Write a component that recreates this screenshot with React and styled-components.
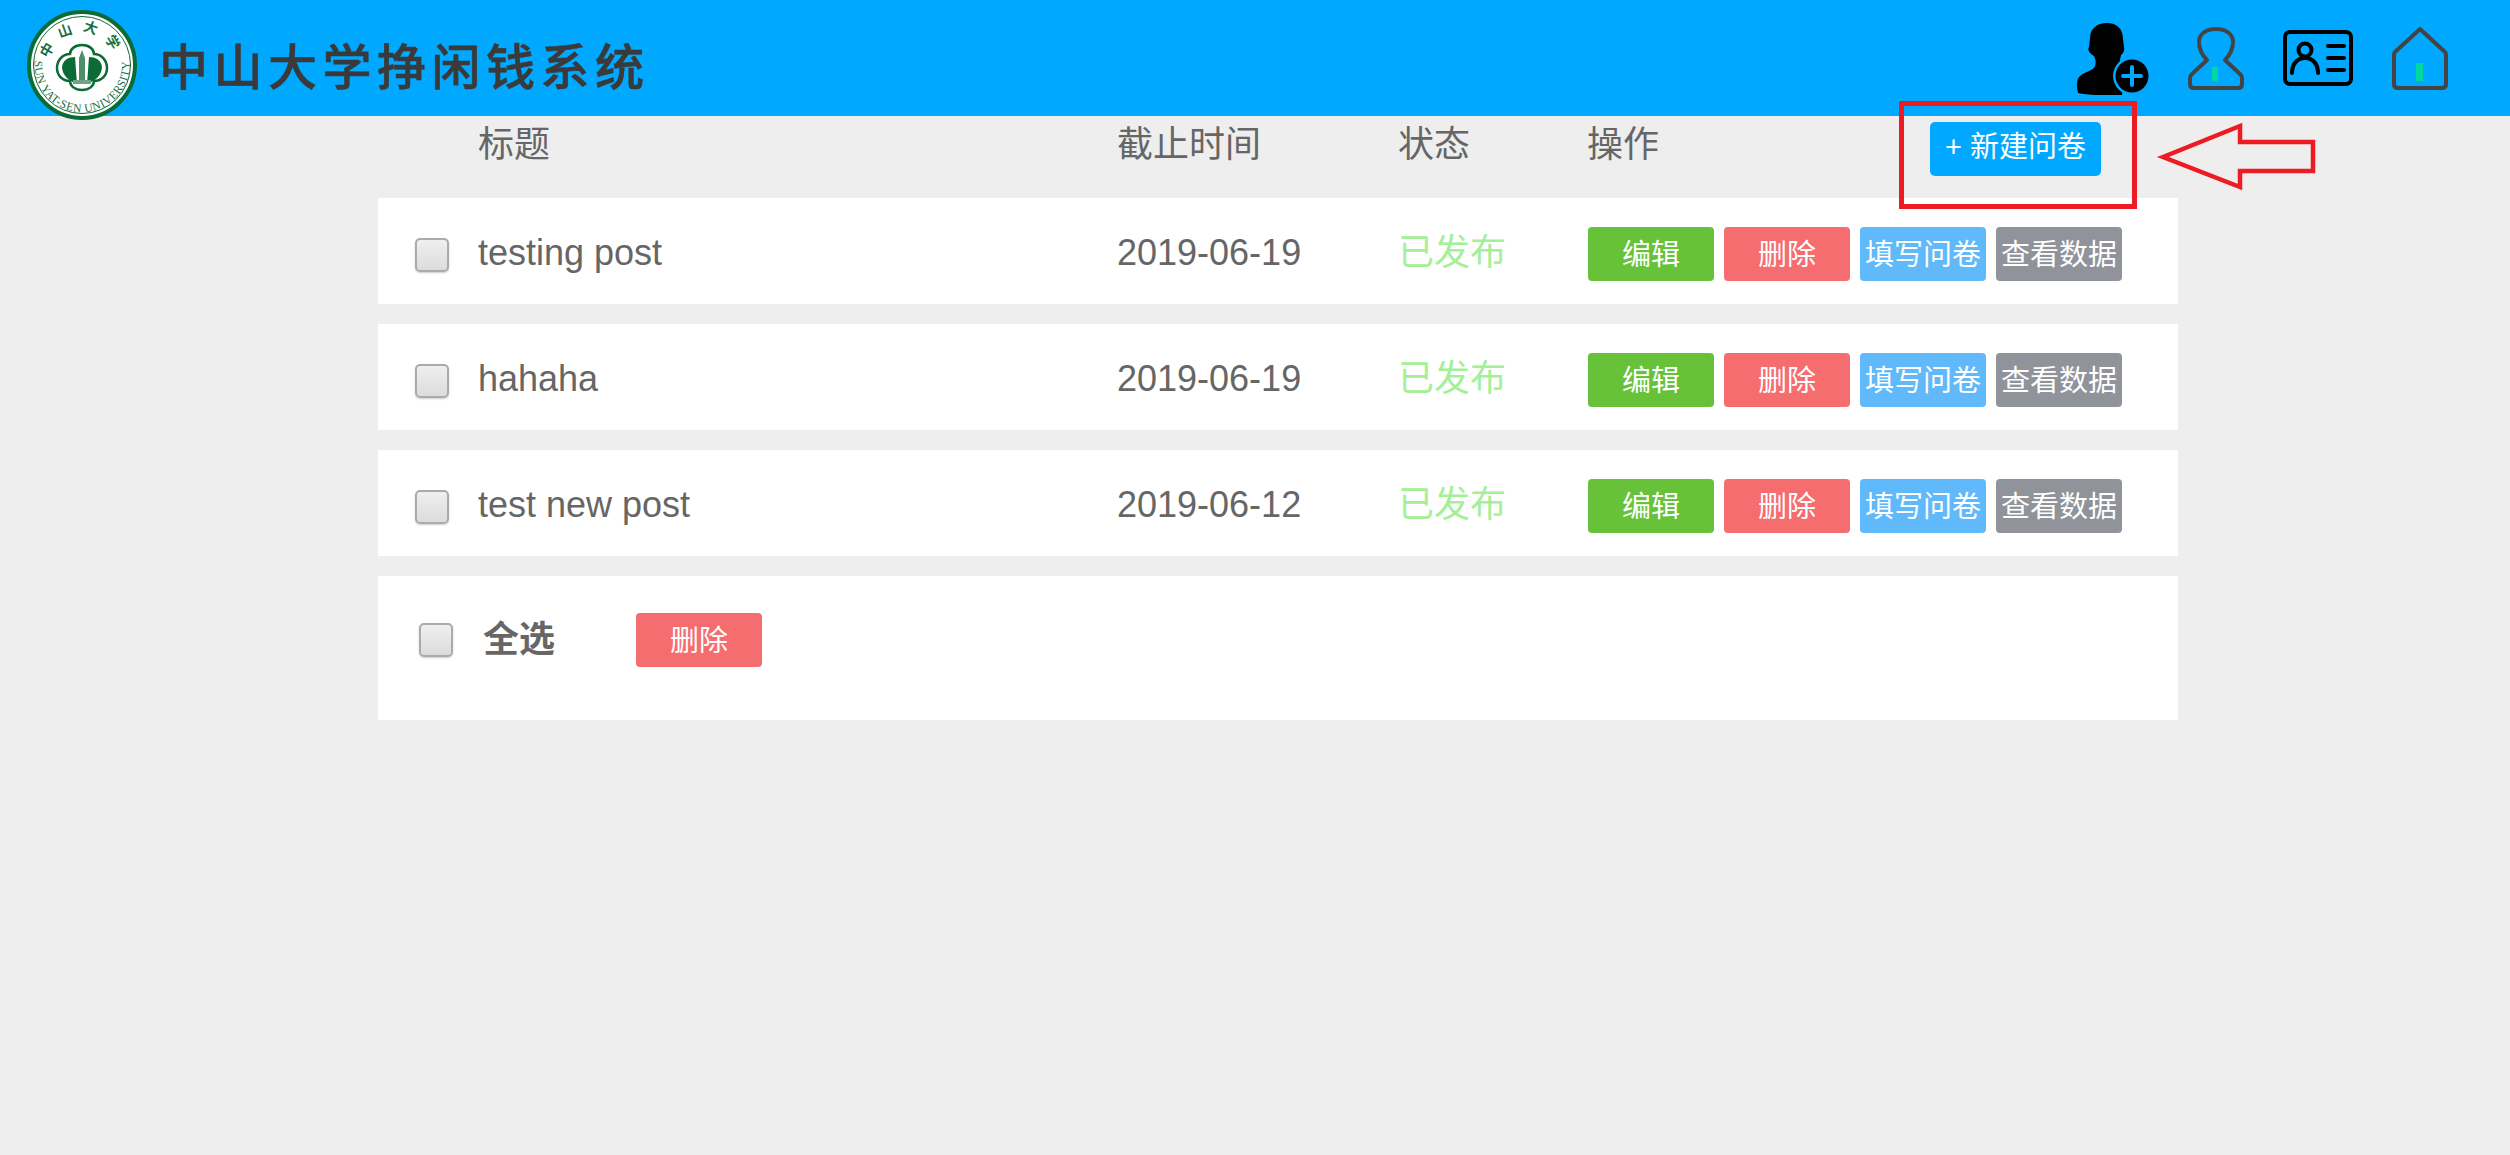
import styled, { createGlobalStyle } from "styled-components";

const GlobalStyle = createGlobalStyle`
    html, body {
        margin: 0;
        padding: 0;
        background: #EEEEEE;
    }
    body {
        font-family: "Liberation Sans", "Noto Sans CJK SC", sans-serif;
        color: #666;
    }
`;

const posts = [
    { title: "testing post", date: "2019-06-19", status: "已发布" },
    { title: "hahaha", date: "2019-06-19", status: "已发布" },
    { title: "test new post", date: "2019-06-12", status: "已发布" },
];

const actions = [
    { label: "编辑", color: "#67C23A" },
    { label: "删除", color: "#F66D6F" },
    { label: "填写问卷", color: "#5FB9FA" },
    { label: "查看数据", color: "#909399" },
];

const Logo = () => (
    <LogoSvg viewBox="0 0 110 110">
        <defs>
            <path id="logoBottom" d="M10.5 38 A47.5 47.5 0 1 0 99.5 38" />
            <path id="logoTop" d="M22 55 A33 33 0 0 1 88 55" />
        </defs>
        <circle cx="55" cy="55" r="53" fill="#fff" stroke="#0B6B35" strokeWidth="4" />
        <circle cx="55" cy="55" r="48.5" fill="none" stroke="#0B6B35" strokeWidth="1" />
        <text fontFamily="Liberation Serif, serif" fontSize="11.5" fill="#17703F">
            <textPath href="#logoBottom" startOffset="50%" textAnchor="middle" letterSpacing="0.6">
                SUN YAT-SEN UNIVERSITY
            </textPath>
        </text>
        <text fontFamily="Noto Sans CJK SC, sans-serif" fontWeight="700" fontSize="14" fill="#17703F">
            <textPath href="#logoTop" startOffset="50%" textAnchor="middle" letterSpacing="9">
                中山大学
            </textPath>
        </text>
        <path
            d="M55 35 C63 35 67 40 67 44 C75 44 80 51 80 58 C80 65 75 71 67 71 C67 76 62 80 55 80 C48 80 43 76 43 71 C35 71 30 65 30 58 C30 51 35 44 43 44 C43 40 47 35 55 35 Z"
            fill="#fff"
            stroke="#0B6B35"
            strokeWidth="2.5"
        />
        <path
            d="M35 58 C35 50 42 47 48 47 L50 74 C42 71 36 66 35 58 Z M75 58 C75 50 68 47 62 47 L60 74 C68 71 74 66 75 58 Z"
            fill="#0B6B35"
        />
        <path d="M52 48 L55 40 L58 48 L58 72 L52 72 Z" fill="#4E8F69" />
        <path d="M46 70 H64 V74 H46 Z" fill="#6FA487" />
    </LogoSvg>
);

const UserPlusIcon = () => (
    <UserIconSvg width="72" height="72" viewBox="0 0 72 72">
        <path
            d="M30 0 C40 0 46 6 46 16 L47 24 C48 27 46 31 44 32 C43 37 42 40 44 42 L47 45 L45 72 C30 73 12 72 1 70 C-1 62 0 55 3 53 C9 48 16 48 18 43 C19 40 19 37 17 33 C13 31 10 27 12 24 L13 15 C13 6 20 0 30 0 Z"
            fill="#000"
        />
        <circle cx="55" cy="53" r="19" fill="#00A8FF" />
        <circle cx="55" cy="53" r="16.5" fill="#000" />
        <path d="M55 44 V62 M46 53 H64" stroke="#00A8FF" strokeWidth="4" strokeLinecap="round" />
    </UserIconSvg>
);

const PersonIcon = () => (
    <svg width="56" height="63" viewBox="0 0 56 63" fill="none">
        <path
            d="M19 33 C14 28 11 22 11 15 C11 7 18 2 28 2 C38 2 45 7 45 15 C45 22 42 28 37 33 L52 47 C53 48 54 49 54 51 V57 C54 59 53 61 50 61 H6 C3 61 2 59 2 57 V51 C2 49 3 48 4 47 Z"
            stroke="#444"
            strokeWidth="4"
            strokeLinejoin="round"
        />
        <rect x="24" y="40" width="6" height="14" fill="#00D8A0" />
    </svg>
);

const CardIcon = () => (
    <svg width="70" height="56" viewBox="0 0 70 56" fill="none" stroke="#000" strokeWidth="4" strokeLinecap="round">
        <rect x="2" y="2" width="66" height="52" rx="5" />
        <circle cx="22" cy="20" r="6.5" />
        <path d="M9 43 C9 33 15 28 22 28 C29 28 35 33 35 43" />
        <path d="M45 16 H61 M45 28 H61 M45 40 H61" />
    </svg>
);

const HomeIcon = () => (
    <svg width="56" height="63" viewBox="0 0 56 63" fill="none">
        <path
            d="M28 2 L53 25 C54 26 54 27 54 28 V57 C54 59 53 61 50 61 H6 C3 61 2 59 2 57 V28 C2 27 2 26 3 25 Z"
            stroke="#444"
            strokeWidth="4"
            strokeLinejoin="round"
        />
        <rect x="24" y="36" width="7" height="18" fill="#00D8A0" />
    </svg>
);

const App = () => {
    return (
        <Page>
            <GlobalStyle />
            <Header>
                <Logo />
                <SiteName>中山大学挣闲钱系统</SiteName>
                <HeaderIcons>
                    <UserPlusIcon />
                    <PersonIcon />
                    <CardIcon />
                    <HomeIcon />
                </HeaderIcons>
            </Header>

            <Content>
                <TableHead>
                    <span />
                    <HeadCell>标题</HeadCell>
                    <HeadCell>截止时间</HeadCell>
                    <HeadCell>状态</HeadCell>
                    <HeadCell>操作</HeadCell>
                    <NewButton>+ 新建问卷</NewButton>
                </TableHead>

                <Rows>
                    {posts.map((post, index) => (
                        <Row key={index}>
                            <Check />
                            <Cell>{post.title}</Cell>
                            <Cell>{post.date}</Cell>
                            <Status>{post.status}</Status>
                            <Actions>
                                {actions.map((action) => (
                                    <ActionButton key={action.label} $color={action.color}>
                                        {action.label}
                                    </ActionButton>
                                ))}
                            </Actions>
                        </Row>
                    ))}
                    <SelectAll>
                        <Check />
                        <SelectLabel>全选</SelectLabel>
                        <ActionButton $color="#F66D6F">删除</ActionButton>
                    </SelectAll>
                </Rows>
            </Content>

            <Annotation viewBox="0 0 430 110" fill="none" stroke="#ED1C24">
                <rect x="2.5" y="2.5" width="233" height="103" strokeWidth="5" />
                <path d="M264 56 L341 25 V41 H414 V70 H341 V86 Z" strokeWidth="4.5" />
            </Annotation>
        </Page>
    );
};

export default App;

const Page = styled.div`
    position: relative;
    min-height: 1155px;
    overflow: hidden;
`;

const Header = styled.header`
    height: 116px;
    background: #00A8FF;
    display: flex;
    align-items: center;
    padding: 0 62px 0 27px;
`;

const LogoSvg = styled.svg`
    width: 110px;
    height: 110px;
    flex-shrink: 0;
    margin-top: 14px;
    overflow: visible;
`;

const SiteName = styled.div`
    margin: 10px 0 0 22px;
    color: #3A3A3A;
    font-family: "Noto Sans CJK SC", sans-serif;
    font-size: 49px;
    font-weight: 500;
    letter-spacing: 5.5px;
    white-space: nowrap;
    -webkit-text-stroke: 0.6px #3A3A3A;
`;

const HeaderIcons = styled.div`
    margin-left: auto;
    display: flex;
    align-items: center;
    gap: 39px;
`;

const UserIconSvg = styled.svg`
    margin-top: 2px;
`;

const Content = styled.main`
    width: 1800px;
    margin-left: 378px;
`;

const TableHead = styled.div`
    height: 82px;
    display: grid;
    grid-template-columns: 100px 639px 281px 189px 343px 171px;
    font-size: 36px;
    line-height: 44px;
    padding-top: 6px;
    box-sizing: border-box;
`;

const HeadCell = styled.div`
    margin-top: 1px;
    white-space: nowrap;
`;

const NewButton = styled.div`
    height: 54px;
    background: #00A8FF;
    border-radius: 5px;
    color: #fff;
    font-size: 29px;
    line-height: 50px;
    text-align: center;
    white-space: nowrap;
`;

const Rows = styled.div`
    display: flex;
    flex-direction: column;
    gap: 20px;
`;

const Row = styled.div`
    height: 106px;
    background: #fff;
    display: grid;
    grid-template-columns: 100px 639px 281px 190px 1fr;
    align-items: center;
    font-size: 36px;
    line-height: 44px;
`;

const Cell = styled.span`
    margin-top: 3px;
`;

const Check = styled.div`
    width: 34px;
    height: 34px;
    box-sizing: border-box;
    margin: 7px 0 0 37px;
    border: 2px solid #ABABAB;
    border-radius: 5px;
    background: linear-gradient(#EFEFEF, #DCDCDC);
    box-shadow: 0 1px 2px rgba(0, 0, 0, 0.2);
`;

const Status = styled(Cell)`
    color: #A3F097;
`;

const Actions = styled.div`
    display: flex;
    gap: 10px;
    margin-top: 6px;
`;

const ActionButton = styled.div`
    width: 126px;
    height: 54px;
    background: ${props => props.$color};
    border-radius: 4px;
    color: #fff;
    font-size: 29px;
    line-height: 56px;
    text-align: center;
    white-space: nowrap;
`;

const SelectAll = styled.div`
    height: 144px;
    background: #fff;
    display: flex;
    align-items: flex-start;
    padding-top: 37px;
    box-sizing: border-box;

    ${Check} {
        margin: 10px 0 0 41px;
    }
`;

const SelectLabel = styled.div`
    width: 153px;
    margin-left: 30px;
    font-size: 36px;
    font-weight: 700;
    line-height: 44px;
    margin-top: 5px;
`;

const Annotation = styled.svg`
    position: absolute;
    left: 1899px;
    top: 101px;
    width: 430px;
    height: 110px;
`;
